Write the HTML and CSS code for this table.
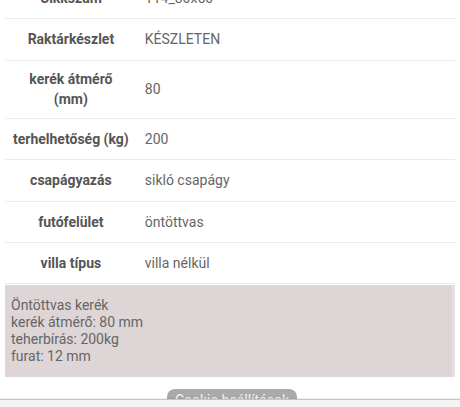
FILE: index.html
```html
<!DOCTYPE html>
<html lang="hu">
<head>
<meta charset="utf-8">
<link rel="stylesheet" href="styles.css">
</head>
<body>
<div class="page">
  <table class="specs">
    <tr><th>Cikkszám</th><td>114_80x50</td></tr>
    <tr><th>Raktárkészlet</th><td>KÉSZLETEN</td></tr>
    <tr><th>kerék átmérő<br>(mm)</th><td>80</td></tr>
    <tr><th>terhelhetőség (kg)</th><td>200</td></tr>
    <tr><th>csapágyazás</th><td>sikló csapágy</td></tr>
    <tr><th>futófelület</th><td>öntöttvas</td></tr>
    <tr><th>villa típus</th><td>villa nélkül</td></tr>
  </table>
  <div class="desc">Öntöttvas kerék<br>kerék átmérő: 80 mm<br>teherbírás: 200kg<br>furat: 12 mm</div>
</div>
<button class="cookie">Cookie beállítások</button>
<div class="bottombar"></div>
</body>
</html>
```
FILE: styles.css
```css
html, body {
  margin: 0;
  padding: 0;
  background: #fff;
  overflow: hidden;
}
body {
  font-family: Roboto, "Liberation Sans", sans-serif;
  font-size: 14px;
  color: #666;
}
.page {
  padding: 0 5px;
  margin-top: -22px;
}
.specs {
  width: 100%;
  border-collapse: collapse;
}
.specs tr {
  border-bottom: 1px solid #ebebeb;
}
.specs th {
  font-weight: bold;
  color: #555;
  text-align: center;
  line-height: 20.5px;
  padding: 8px 8px;
  white-space: nowrap;
  width: 1%;
  vertical-align: middle;
}
.specs td {
  text-align: left;
  line-height: 24.4px;
  padding: 8px 8px;
  color: #666;
  vertical-align: middle;
}
.desc {
  margin-top: 1px;
  background: #ddd5d6;
  border-right: 3px solid #e5e0e1;
  padding: 12px 6px;
  line-height: 16.8px;
  color: #666;
}
.cookie {
  position: fixed;
  left: 167px;
  top: 389px;
  width: 130px;
  height: 30px;
  border: none;
  border-radius: 8px 8px 0 0;
  background: #aaaaaa;
  color: #f2f2f2;
  font-family: Roboto, "Liberation Sans", sans-serif;
  font-size: 14px;
  padding: 3px 0 0;
  line-height: 16px;
  display: flex;
  justify-content: center;
  align-items: flex-start;
}
.bottombar {
  position: fixed;
  left: 0;
  right: 0;
  bottom: 0;
  height: 7px;
  background: #f3f3f3;
  border-top: 1px solid #c4c4c4;
  box-shadow: 0 -1px 2px rgba(0,0,0,0.08);
}
```
